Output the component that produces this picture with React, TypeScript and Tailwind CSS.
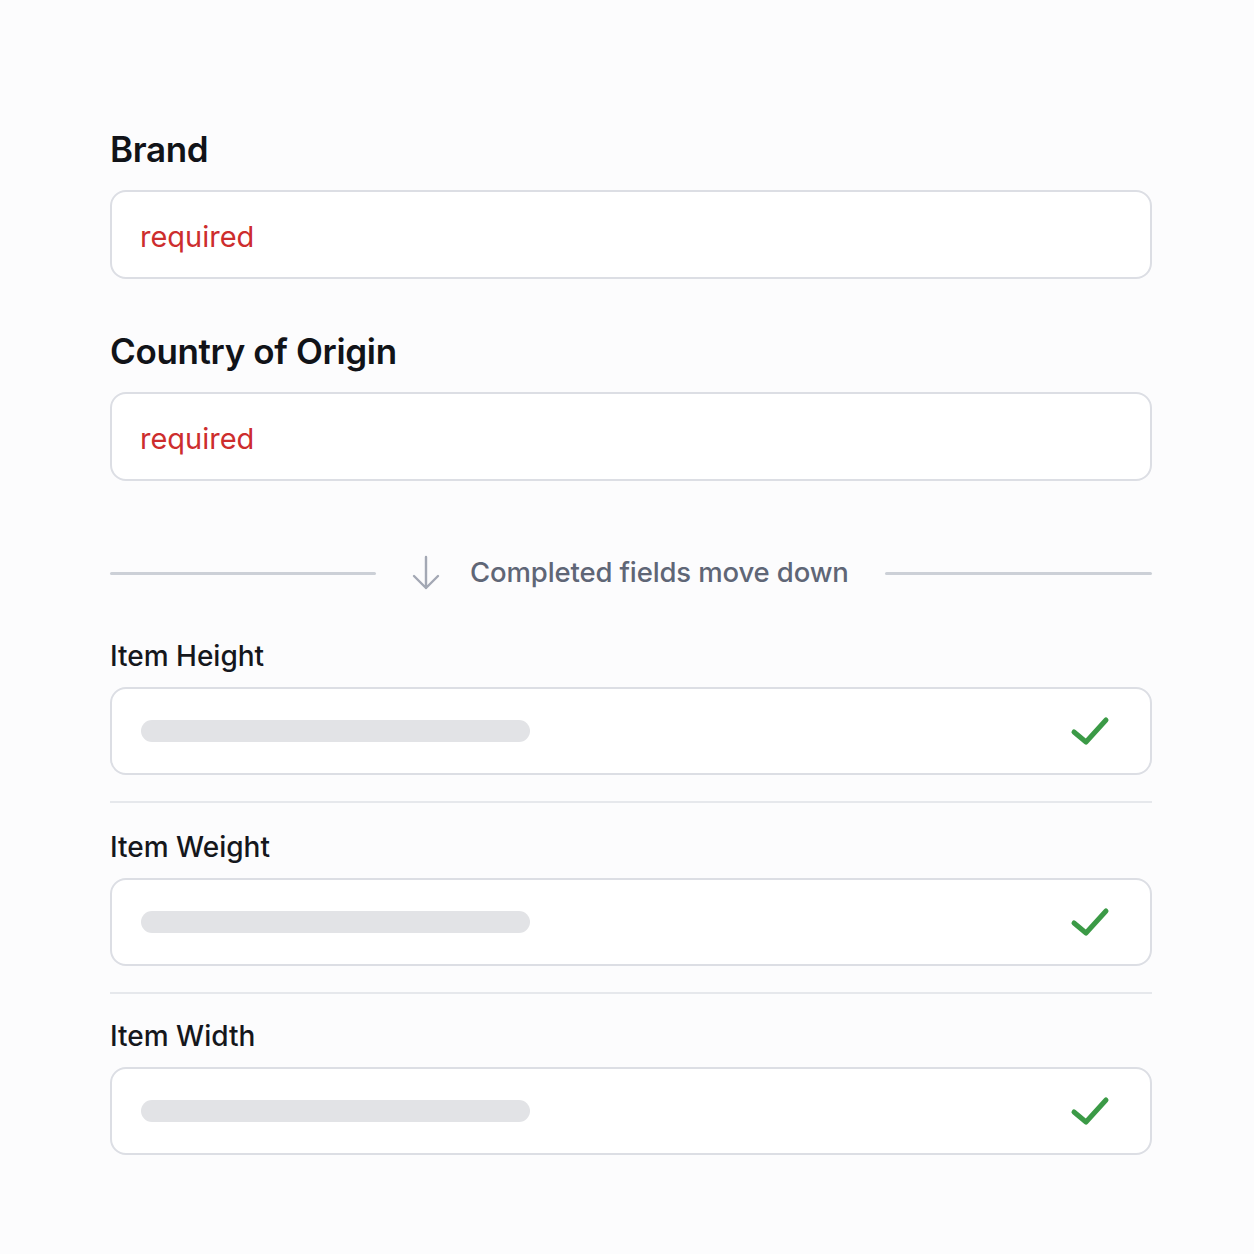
const font = { fontFamily: 'Inter, "Noto Sans", sans-serif' }

function CheckMark() {
  return (
    <svg width="40" height="32" viewBox="0 0 40 32" fill="none" className="shrink-0">
      <path d="M4 17 L16 27 L36 5" stroke="#3b9a46" strokeWidth="5" strokeLinecap="round" strokeLinejoin="round" />
    </svg>
  )
}

function ArrowDown() {
  return (
    <svg width="28" height="36" viewBox="0 0 28 36" fill="none">
      <path d="M14 2 V33 M2 21 L14 33 L26 21" stroke="#a3a8b4" strokeWidth="2.4" strokeLinecap="round" strokeLinejoin="round" />
    </svg>
  )
}

function RequiredField({ label }: { label: string }) {
  return (
    <div className="flex flex-col">
      <div className="h-[40px] flex items-center text-[35px] font-semibold tracking-[-0.01em] text-[#111318]">{label}</div>
      <div className="mt-[21px] h-[89px] rounded-[16px] border-2 border-[#dcdee4] bg-white flex items-center px-[28px] pt-[4px]">
        <span className="text-[29px] text-[#cd2d2d]">required</span>
      </div>
    </div>
  )
}

function CompletedField({ label }: { label: string }) {
  return (
    <div className="flex flex-col">
      <div className="h-[34px] flex items-center text-[28px] font-medium text-[#15171c]">{label}</div>
      <div className="mt-[14px] h-[88px] rounded-[16px] border-2 border-[#dcdee4] bg-white flex items-center justify-between pl-[29px] pr-[40px]">
        <div className="h-[22px] w-[389px] rounded-full bg-[#e2e3e6]" />
        <CheckMark />
      </div>
    </div>
  )
}

export default function App() {
  return (
    <div className="min-h-screen bg-[#fcfcfd] pt-[129px]" style={font}>
      <div className="ml-[110px] w-[1042px] flex flex-col">
        <RequiredField label="Brand" />
        <div className="h-[52px]" />
        <RequiredField label="Country of Origin" />

        {/* divider with note */}
        <div className="mt-[75px] flex items-center h-[34px]">
          <div className="h-[3px] w-[266px] bg-[#ccd0d7] rounded-full" />
          <div className="ml-[36px] flex items-center">
            <ArrowDown />
            <span className="ml-[30px] text-[27.5px] tracking-[-0.005em] font-medium text-[#5f6676]">Completed fields move down</span>
          </div>
          <div className="flex-1" />
          <div className="h-[3px] w-[267px] bg-[#ccd0d7] rounded-full" />
        </div>

        <div className="mt-[49px]">
          <CompletedField label="Item Height" />
        </div>
        <div className="mt-[26px] h-[2px] bg-[#e6e8ec]" />
        <div className="mt-[27px]">
          <CompletedField label="Item Weight" />
        </div>
        <div className="mt-[26px] h-[2px] bg-[#e6e8ec]" />
        <div className="mt-[25px]">
          <CompletedField label="Item Width" />
        </div>
      </div>
    </div>
  )
}
